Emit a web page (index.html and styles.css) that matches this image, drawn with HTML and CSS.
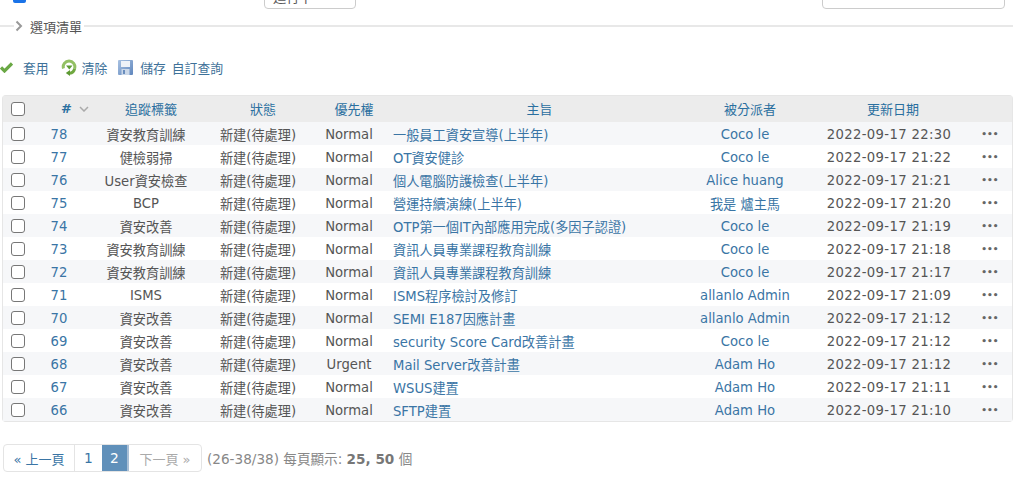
FILE: index.html
```html
<!DOCTYPE html>
<html lang="zh-Hant">
<head>
<meta charset="utf-8">
<title>議題清單</title>
<link rel="stylesheet" href="styles.css">
</head>
<body>
<div class="clip-row">
  <span class="blue-check"></span>
  <span class="select-box">進行中</span>
  <span class="text-box"></span>
</div>
<div class="legend">
  <svg class="chev" width="8" height="12" viewBox="0 0 8 12"><path d="M1.500 1.500 6 6l-4.500 4.500" fill="none" stroke="#999" stroke-width="2"/></svg>
  <span class="legend-text">選項清單</span>
</div>
<div class="toolbar">
  <a class="tool tool-apply">
    <svg width="13" height="12" viewBox="0 0 13 12"><path d="M1 6.500 4.500 10 12 2.500" fill="none" stroke="#6aa845" stroke-width="3.200"/></svg>
    <span>套用</span>
  </a>
  <a class="tool tool-clear">
    <svg width="16" height="17" viewBox="0 0 16 17"><path d="M2.500 9.500A5.800 5.800 0 1 1 13.600 9.500" fill="none" stroke="#93c063" stroke-width="3"/><path d="M13.600 9.500A5.800 5.800 0 0 1 8.500 14.300" fill="none" stroke="#6fa83f" stroke-width="3"/><path d="M5 6.500h6.500L8.300 10.500z" fill="#5d9a33"/><path d="M9 11v6L4.800 14z" fill="#5d9a33"/></svg>
    <span>清除</span>
  </a>
  <a class="tool tool-save">
    <svg width="15" height="15" viewBox="0 0 15 15"><defs><linearGradient id="disk" x1="0" y1="0" x2="1" y2="1"><stop offset="0" stop-color="#a9c2e2"/><stop offset="1" stop-color="#5f86bd"/></linearGradient></defs><rect width="15" height="15" rx="1" fill="url(#disk)"/><rect x="3" y="1" width="9" height="6" fill="#eef2f8"/><rect x="3.500" y="9" width="8" height="6" fill="#cbd8e9"/><rect x="5" y="10" width="2" height="4" fill="#6a8dbd"/></svg>
    <span>儲存</span><span class="tool-gap">自訂查詢</span>
  </a>
</div>
<table class="issues">
  <colgroup>
    <col class="c-check"><col class="c-id"><col class="c-tag"><col class="c-status"><col class="c-pri"><col class="c-subject"><col class="c-user"><col class="c-date"><col class="c-act">
  </colgroup>
  <thead>
    <tr>
      <th><span class="box"></span></th>
      <th class="th-id"># <svg class="sort" width="10" height="6" viewBox="0 0 10 6"><path d="M1 1l4 4 4-4" fill="none" stroke="#aaa" stroke-width="1.500"/></svg></th>
      <th class="th-shift">追蹤標籤</th><th class="th-shift">狀態</th><th class="th-shift">優先權</th><th class="th-shift">主旨</th><th class="th-shift">被分派者</th><th class="th-date">更新日期</th><th></th>
    </tr>
  </thead>
  <tbody>
    <tr><td><span class="box"></span></td><td class="link">78</td><td>資安教育訓練</td><td>新建(待處理)</td><td>Normal</td><td class="subject link">一般員工資安宣導(上半年)</td><td class="link">Coco le</td><td class="date">2022-09-17 22:30</td><td class="dots">•••</td></tr>
    <tr><td><span class="box"></span></td><td class="link">77</td><td>健檢弱掃</td><td>新建(待處理)</td><td>Normal</td><td class="subject link">OT資安健診</td><td class="link">Coco le</td><td class="date">2022-09-17 21:22</td><td class="dots">•••</td></tr>
    <tr><td><span class="box"></span></td><td class="link">76</td><td>User資安檢查</td><td>新建(待處理)</td><td>Normal</td><td class="subject link">個人電腦防護檢查(上半年)</td><td class="link">Alice huang</td><td class="date">2022-09-17 21:21</td><td class="dots">•••</td></tr>
    <tr><td><span class="box"></span></td><td class="link">75</td><td>BCP</td><td>新建(待處理)</td><td>Normal</td><td class="subject link">營運持續演練(上半年)</td><td class="link">我是 爐主馬</td><td class="date">2022-09-17 21:20</td><td class="dots">•••</td></tr>
    <tr><td><span class="box"></span></td><td class="link">74</td><td>資安改善</td><td>新建(待處理)</td><td>Normal</td><td class="subject link">OTP第一個IT內部應用完成(多因子認證)</td><td class="link">Coco le</td><td class="date">2022-09-17 21:19</td><td class="dots">•••</td></tr>
    <tr><td><span class="box"></span></td><td class="link">73</td><td>資安教育訓練</td><td>新建(待處理)</td><td>Normal</td><td class="subject link">資訊人員專業課程教育訓練</td><td class="link">Coco le</td><td class="date">2022-09-17 21:18</td><td class="dots">•••</td></tr>
    <tr><td><span class="box"></span></td><td class="link">72</td><td>資安教育訓練</td><td>新建(待處理)</td><td>Normal</td><td class="subject link">資訊人員專業課程教育訓練</td><td class="link">Coco le</td><td class="date">2022-09-17 21:17</td><td class="dots">•••</td></tr>
    <tr><td><span class="box"></span></td><td class="link">71</td><td>ISMS</td><td>新建(待處理)</td><td>Normal</td><td class="subject link">ISMS程序檢討及修訂</td><td class="link">allanlo Admin</td><td class="date">2022-09-17 21:09</td><td class="dots">•••</td></tr>
    <tr><td><span class="box"></span></td><td class="link">70</td><td>資安改善</td><td>新建(待處理)</td><td>Normal</td><td class="subject link">SEMI E187因應計畫</td><td class="link">allanlo Admin</td><td class="date">2022-09-17 21:12</td><td class="dots">•••</td></tr>
    <tr><td><span class="box"></span></td><td class="link">69</td><td>資安改善</td><td>新建(待處理)</td><td>Normal</td><td class="subject link">security Score Card改善計畫</td><td class="link">Coco le</td><td class="date">2022-09-17 21:12</td><td class="dots">•••</td></tr>
    <tr><td><span class="box"></span></td><td class="link">68</td><td>資安改善</td><td>新建(待處理)</td><td>Urgent</td><td class="subject link">Mail Server改善計畫</td><td class="link">Adam Ho</td><td class="date">2022-09-17 21:12</td><td class="dots">•••</td></tr>
    <tr><td><span class="box"></span></td><td class="link">67</td><td>資安改善</td><td>新建(待處理)</td><td>Normal</td><td class="subject link">WSUS建置</td><td class="link">Adam Ho</td><td class="date">2022-09-17 21:11</td><td class="dots">•••</td></tr>
    <tr><td><span class="box"></span></td><td class="link">66</td><td>資安改善</td><td>新建(待處理)</td><td>Normal</td><td class="subject link">SFTP建置</td><td class="link">Adam Ho</td><td class="date">2022-09-17 21:10</td><td class="dots">•••</td></tr>
  </tbody>
</table>
<div class="pager-row">
  <div class="pager">
    <a class="page page-prev">« 上一頁</a>
    <a class="page page-num">1</a>
    <span class="page page-num page-current">2</span>
    <span class="page page-next">下一頁 »</span>
  </div>
  <span class="pager-info">(26-38/38) 每頁顯示: <b>25, 50</b> 個</span>
</div>
</body>
</html>
```

FILE: styles.css
```css
html, body {
  margin: 0;
  padding: 0;
  background: #fff;
}
body {
  width: 1024px;
  height: 490px;
  overflow: hidden;
  font-family: "DejaVu Sans", "Noto Sans CJK TC", sans-serif;
  font-size: 13.2px;
  color: #555;
}
.clip-row {
  display: flex;
  align-items: flex-end;
  height: 9px;
  overflow: hidden;
}
.blue-check {
  width: 13px;
  height: 13px;
  margin: 0 0 6px 13px;
  flex: none;
  background: #1a73e8;
  border-radius: 2px;
}
.select-box {
  box-sizing: border-box;
  width: 92px;
  height: 28px;
  margin-left: 238px;
  padding: 5px 8px;
  border: 1px solid #ccc;
  border-radius: 4px;
  flex: none;
  color: #555;
}
.text-box {
  box-sizing: border-box;
  width: 183px;
  height: 28px;
  margin-left: 466px;
  border: 1px solid #ccc;
  border-radius: 4px;
  flex: none;
}
.legend {
  display: flex;
  align-items: center;
  height: 20px;
  margin: 7px 11px 0 0;
  padding-left: 14px;
  background: linear-gradient(#e8e8e8, #e8e8e8) 0 9px / 100% 2px no-repeat;
}
.chev {
  padding: 0 4px 0 1px;
  background: #fff;
  box-sizing: content-box;
}
.legend-text {
  padding: 0 2px 0 3px;
  background: #fff;
  font-size: 13px;
  color: #555;
}
.toolbar {
  display: flex;
  align-items: center;
  height: 18px;
  margin-top: 22px;
  font-size: 12.800px;
}
.tool {
  display: flex;
  align-items: center;
  color: #3d7199;
}
.tool-apply { margin-right: 12px; }
.tool-apply svg { margin-right: 10px; }
.tool-clear { margin-right: 11px; }
.tool-clear svg { margin-right: 5px; }
.tool-save svg { margin-right: 7px; }
.tool-gap { margin-left: 6px; }
.issues {
  table-layout: fixed;
  border-collapse: collapse;
  width: 1009px;
  margin: 20px 0 0 3px;
  box-shadow: 0 0 0 1px #e6e6e6;
  border-radius: 3px;
}
.c-check { width: 30px; }
.c-id { width: 52px; }
.c-tag { width: 122px; }
.c-status { width: 102px; }
.c-pri { width: 80px; }
.c-subject { width: 291px; }
.c-user { width: 130px; }
.c-date { width: 158px; }
.c-act { width: 44px; }
.issues th {
  box-sizing: border-box;
  height: 26px;
  padding: 0 0 1px;
  background: #ececec;
  font-weight: normal;
  font-size: 13px;
  color: #2a6f9f;
  text-align: center;
  white-space: nowrap;
}
.issues th.th-id {
  font-weight: bold;
  text-align: left;
  padding-left: 28px;
}
.issues th.th-shift { padding-left: 10px; }
.issues th.th-date { padding-left: 8px; }
.sort {
  margin-left: 3px;
  vertical-align: 1px;
}
.issues td {
  box-sizing: border-box;
  height: 23px;
  padding: 1px 0 0;
  text-align: center;
  white-space: nowrap;
  color: #555;
}
.issues tbody tr:nth-child(odd) td { background: #f6f7f9; }
.issues tbody tr:nth-child(even) td { background: #fff; }
.issues td.link { color: #3a75a5; }
.issues td.date { letter-spacing: .35px; }
.issues td.subject {
  padding-left: 4px;
  text-align: left;
}
.issues td.dots {
  font-size: 9px;
  font-weight: bold;
  color: #666;
}
.box {
  display: block;
  box-sizing: border-box;
  width: 14px;
  height: 14px;
  margin-left: 8px;
  border: 1.500px solid #777;
  border-radius: 3px;
  background: #fff;
}
.pager-row {
  display: flex;
  align-items: center;
  margin: 23px 0 0 3px;
}
.pager {
  display: flex;
  height: 28px;
  box-sizing: border-box;
  border: 1px solid #e4e4e4;
  border-radius: 4px;
  overflow: hidden;
}
.page {
  display: flex;
  align-items: center;
  justify-content: center;
  box-sizing: border-box;
  color: #3a75a5;
  font-size: 13px;
  white-space: nowrap;
}
.page-prev { width: 71px; border-right: 1px solid #e4e4e4; }
.page-num { width: 27px; font-size: 13.800px; }
.page-current { background: #6090ba; color: #fff; border-right: 2px solid #a9bfd6; }
.page-next { width: 72px; color: #aaa; }
.pager-info {
  margin-left: 5px;
  color: #888;
  font-size: 13.600px;
}
.pager-info b { color: #777; }
```
